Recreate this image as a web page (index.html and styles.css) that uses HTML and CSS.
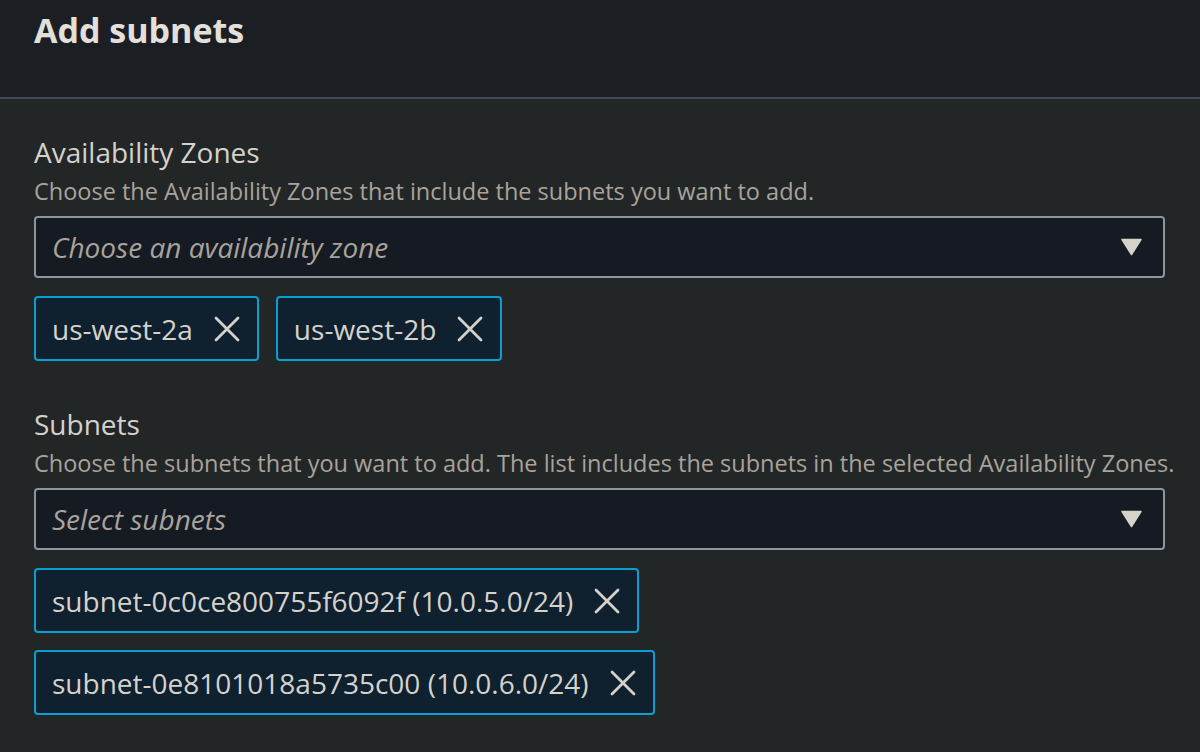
FILE: index.html
```html
<!DOCTYPE html>
<html lang="en">
<head>
<meta charset="utf-8">
<title>Add subnets</title>
<link rel="stylesheet" href="styles.css">
</head>
<body>
<div class="page">
  <header class="header">
    <h1 class="title">Add subnets</h1>
  </header>
  <main class="content">
    <section class="field">
      <div class="label">Availability Zones</div>
      <div class="desc">Choose the Availability Zones that include the subnets you want to add.</div>
      <div class="select">
        <span class="placeholder">Choose an availability zone</span>
        <svg class="caret" width="21" height="18" viewBox="0 0 21 18"><path d="M1 1.5 H20 L10.5 16.5 Z" fill="#d5d2cc" stroke="#d5d2cc" stroke-width="1.5" stroke-linejoin="round"/></svg>
      </div>
      <div class="tokens">
        <div class="token"><span>us-west-2a</span><svg class="x" width="26" height="26" viewBox="0 0 26 26"><path d="M2 2 L24 24 M24 2 L2 24" stroke="#d5d2cc" stroke-width="2.8" stroke-linecap="round"/></svg></div>
        <div class="token"><span>us-west-2b</span><svg class="x" width="26" height="26" viewBox="0 0 26 26"><path d="M2 2 L24 24 M24 2 L2 24" stroke="#d5d2cc" stroke-width="2.8" stroke-linecap="round"/></svg></div>
      </div>
    </section>
    <section class="field">
      <div class="label">Subnets</div>
      <div class="desc">Choose the subnets that you want to add. The list includes the subnets in the selected Availability Zones.</div>
      <div class="select">
        <span class="placeholder">Select subnets</span>
        <svg class="caret" width="21" height="18" viewBox="0 0 21 18"><path d="M1 1.5 H20 L10.5 16.5 Z" fill="#d5d2cc" stroke="#d5d2cc" stroke-width="1.5" stroke-linejoin="round"/></svg>
      </div>
      <div class="tokens column">
        <div class="token"><span>subnet-0c0ce800755f6092f (10.0.5.0/24)</span><svg class="x" width="26" height="26" viewBox="0 0 26 26"><path d="M2 2 L24 24 M24 2 L2 24" stroke="#d5d2cc" stroke-width="2.8" stroke-linecap="round"/></svg></div>
        <div class="token"><span>subnet-0e8101018a5735c00 (10.0.6.0/24)</span><svg class="x" width="26" height="26" viewBox="0 0 26 26"><path d="M2 2 L24 24 M24 2 L2 24" stroke="#d5d2cc" stroke-width="2.8" stroke-linecap="round"/></svg></div>
      </div>
    </section>
  </main>
</div>
</body>
</html>
```

FILE: styles.css
```css
* { box-sizing: border-box; }
html, body {
  margin: 0;
  padding: 0;
  background: #232627;
  height: 100%;
  overflow: hidden;
}
body {
  font-family: "Open Sans", "Noto Sans", sans-serif;
  color: #d5d2cc;
}
.header {
  background: #1b1e23;
  height: 99px;
  border-bottom: 2px solid #414a52;
  padding: 6px 34px 0;
}
.title {
  margin: 0;
  font-size: 34px;
  line-height: 48px;
  font-weight: 700;
  color: #e3e0db;
}
.content {
  padding: 36px 34px 0 34px;
}
.field {
  margin-bottom: 46px;
}
.label {
  font-size: 28px;
  line-height: 34px;
  font-weight: 500;
  color: #d5d2cc;
}
.desc {
  font-size: 23.5px;
  line-height: 30px;
  color: #a8a39c;
  margin-top: 7px;
  white-space: nowrap;
}
.select {
  margin-top: 10px;
  height: 62px;
  width: 1131px;
  background: #161a22;
  border: 2px solid #8a989d;
  border-radius: 4px;
  display: flex;
  align-items: center;
  justify-content: space-between;
  padding: 0 21px 0 16px;
}
.placeholder {
  font-size: 28px;
  font-style: italic;
  color: #a8a39c;
}
.caret { display: block; }
.tokens {
  margin-top: 18px;
  display: flex;
  gap: 17px;
}
.tokens.column {
  flex-direction: column;
  align-items: flex-start;
}
.token {
  height: 65px;
  display: flex;
  align-items: center;
  gap: 21px;
  background: #0f202e;
  border: 2px solid #0a9fd0;
  border-radius: 4px;
  padding: 0 17px 0 16px;
  font-size: 28px;
  color: #d5d2cc;
}
.x { display: block; }
```
